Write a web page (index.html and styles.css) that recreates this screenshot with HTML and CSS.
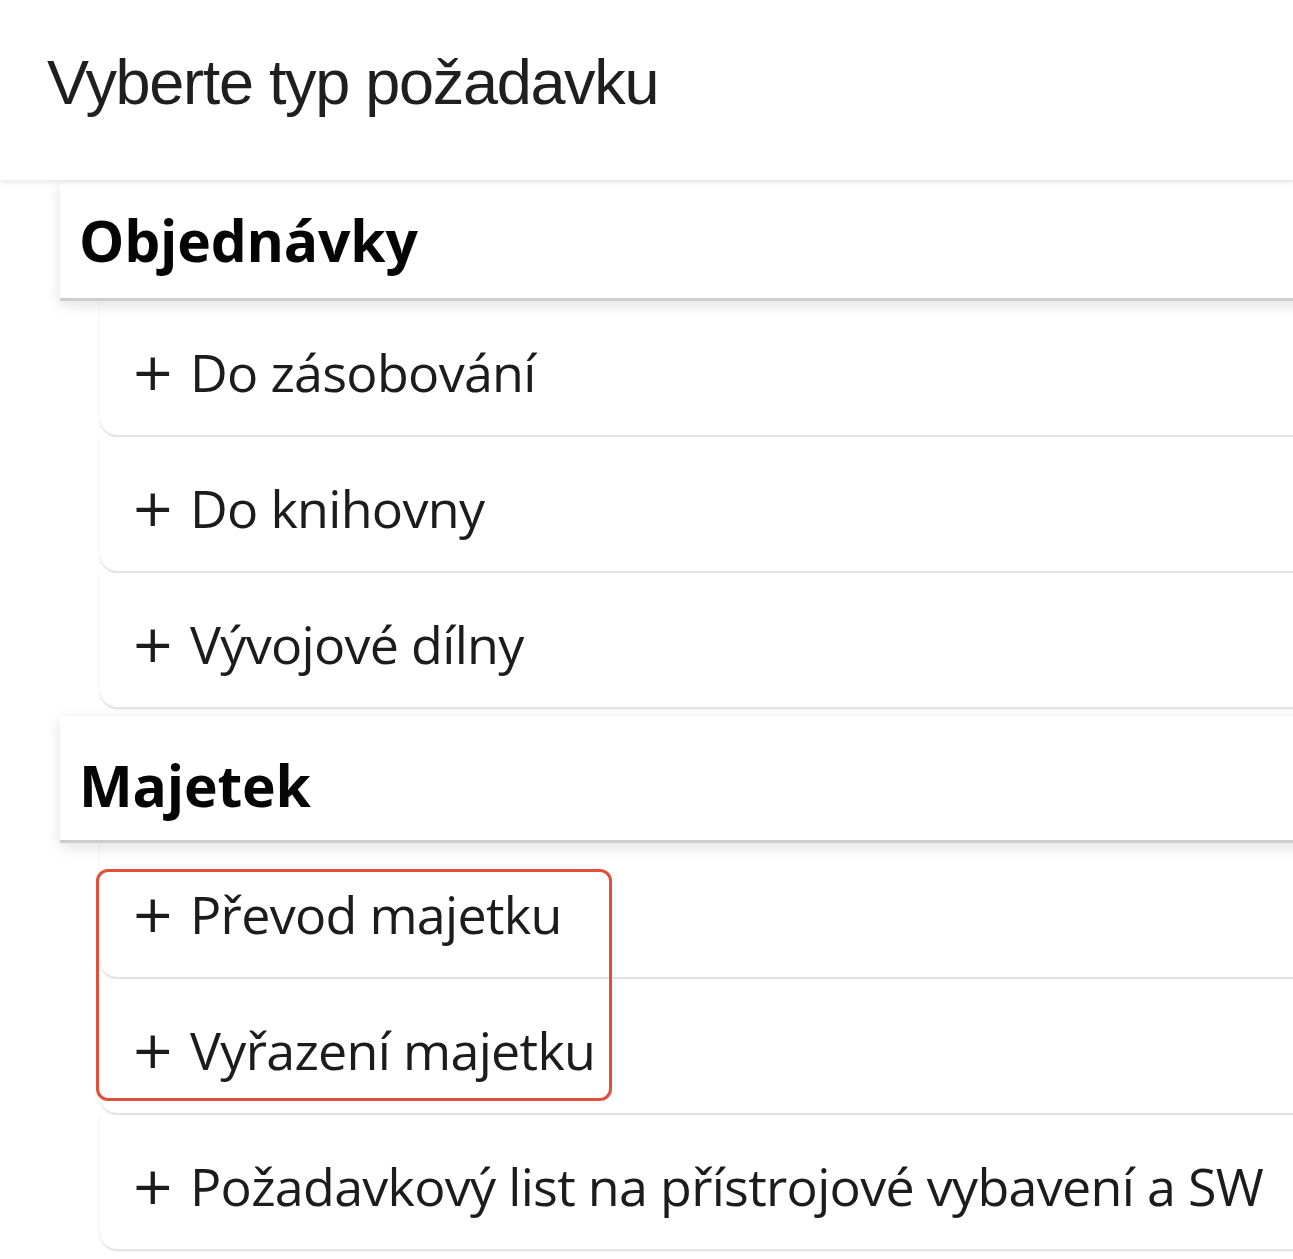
FILE: index.html
```html
<!DOCTYPE html>
<html lang="cs">
<head>
<meta charset="utf-8">
<title>Vyberte typ požadavku</title>
<link rel="stylesheet" href="styles.css">
</head>
<body>
<div class="page">
  <header class="title-bar">
    <h1 class="title">Vyberte typ požadavku</h1>
  </header>
  <main class="panel">
    <section class="group">
      <h2 class="group-head">Objednávky</h2>
      <div class="item"><span class="plus">+</span><span class="label">Do zásobování</span></div>
      <div class="item"><span class="plus">+</span><span class="label">Do knihovny</span></div>
      <div class="item"><span class="plus">+</span><span class="label">Vývojové dílny</span></div>
    </section>
    <section class="group group-assets">
      <h2 class="group-head">Majetek</h2>
      <div class="item"><span class="plus">+</span><span class="label">Převod majetku</span></div>
      <div class="item"><span class="plus">+</span><span class="label">Vyřazení majetku</span></div>
      <div class="item"><span class="plus">+</span><span class="label">Požadavkový list na přístrojové vybavení a SW</span></div>
      <div class="highlight"></div>
    </section>
  </main>
</div>
</body>
</html>
```

FILE: styles.css
```css
html, body {
  margin: 0;
  padding: 0;
  background: #ffffff;
  overflow: hidden;
}

.page {
  width: 1293px;
  height: 1259px;
  overflow: hidden;
  position: relative;
}

.title-bar {
  height: 180px;
  background: #ffffff;
  position: relative;
  z-index: 2;
  box-shadow: 0 2px 6px rgba(0, 0, 0, 0.10);
}

.title {
  margin: 0;
  padding: 52px 0 0 47px;
  font-family: "Liberation Sans", Arial, sans-serif;
  font-weight: 400;
  font-size: 63px;
  letter-spacing: -1.3px;
  line-height: 60px;
  color: #1f1f1f;
}

.panel {
  display: flex;
  flex-direction: column;
  margin-right: -40px;
}

.group {
  display: flex;
  flex-direction: column;
  position: relative;
}

.group-assets {
  margin-top: 7px;
}

.group-head {
  margin: 2px 0 0 60px;
  height: 116px;
  box-sizing: content-box;
  display: flex;
  align-items: center;
  padding-left: 19px;
  background: #ffffff;
  border-bottom: 3px solid #cdcdcd;
  box-shadow: 0 4px 14px rgba(0, 0, 0, 0.12);
  font-family: "Open Sans", "Noto Sans", sans-serif;
  font-weight: 700;
  font-size: 57px;
  letter-spacing: -0.2px;
  color: #050505;
  position: relative;
  z-index: 1;
}

.group-assets .group-head {
  margin-top: 0;
  height: 110px;
  padding-top: 14px;
}

.item {
  margin-left: 100px;
  height: 127px;
  display: flex;
  align-items: center;
  padding: 7px 0 0 31px;
  box-sizing: content-box;
  background: #ffffff;
  border-bottom: 2px solid #e3e3e3;
  border-bottom-left-radius: 18px;
  box-shadow: -1px 1px 2px rgba(0, 0, 0, 0.05);
  color: #1c1c1c;
  white-space: nowrap;
}

.plus {
  width: 59px;
  flex: none;
  font-family: "DejaVu Sans", sans-serif;
  font-weight: 400;
  font-size: 52px;
  line-height: 1;
}

.label {
  font-family: "Open Sans", "Noto Sans", sans-serif;
  font-weight: 400;
  font-size: 52px;
  letter-spacing: -0.7px;
}

.highlight {
  position: absolute;
  left: 96px;
  top: 153px;
  width: 510px;
  height: 226px;
  border: 3px solid #e2503c;
  border-radius: 12px;
  pointer-events: none;
}
```
